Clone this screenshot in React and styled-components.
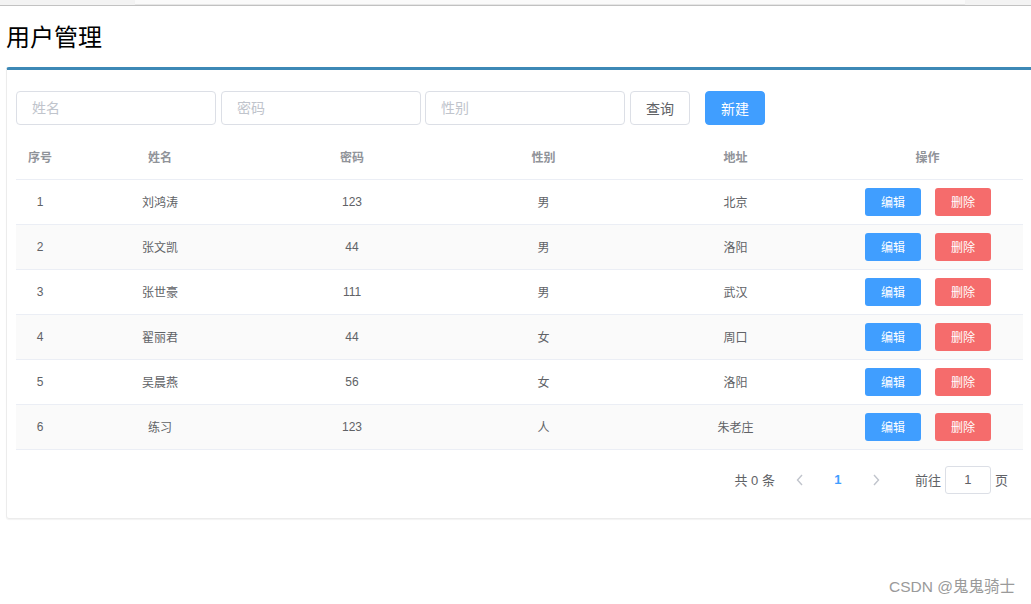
import React from "react";
import styled, { createGlobalStyle } from "styled-components";

const Global = createGlobalStyle`
  html, body { margin: 0; padding: 0; background: #fff; overflow: hidden; }
  body { font-family: "Liberation Sans", "Noto Sans CJK SC", sans-serif; }
  * { box-sizing: border-box; }
`;

const Page = styled.div`
  position: relative;
  width: 1031px;
  height: 604px;
  overflow: hidden;
`;

const TopBar = styled.div`
  height: 6px;
  background: #f3f3f3;
  border-bottom: 1px solid #c2c2c2;
  display: flex;
  padding-left: 135px;
`;

const TopTab = styled.div`
  width: 830px;
  height: 4px;
  background: #fafafa;
  box-shadow: 0 1px 1px rgba(0, 0, 0, 0.06);
`;

const Content = styled.div`
  padding-left: 6px;
`;

const Title = styled.h1`
  margin: 20px 0 17px 0;
  font-size: 24px;
  line-height: 24px;
  font-weight: 400;
  color: #000;
`;

const Box = styled.div`
  width: 1030px;
  border: 1px solid #ececec;
  border-top: 3px solid #3d89b6;
  border-radius: 3px;
  padding: 21px 0 24px 9px;
  box-shadow: 0 1px 1px rgba(0, 0, 0, 0.05);
`;

const Form = styled.div`
  display: flex;
  align-items: center;
  height: 34px;
`;

const Input = styled.input`
  width: 200px;
  height: 34px;
  margin-right: ${(p) => p.$mr}px;
  border: 1px solid #dcdfe6;
  border-radius: 4px;
  padding: 0 15px;
  font-size: 14px;
  font-family: inherit;
  color: #606266;
  outline: none;
  &::placeholder { color: #c0c4cc; }
`;

const Button = styled.button`
  width: 60px;
  height: 34px;
  margin-left: ${(p) => p.$ml || 0}px;
  margin-top: -1px;
  border-radius: 4px;
  font-size: 14px;
  font-family: inherit;
  border: 1px solid ${(p) => (p.$primary ? "#409eff" : "#dcdfe6")};
  background: ${(p) => (p.$primary ? "#409eff" : "#fff")};
  color: ${(p) => (p.$primary ? "#fff" : "#606266")};
  padding: 0;
`;

const Table = styled.table`
  margin-top: 10px;
  width: 1007px;
  border-collapse: collapse;
  table-layout: fixed;
  font-size: 12px;
`;

const Th = styled.th`
  height: 44px;
  padding: 0;
  text-align: center;
  color: #909399;
  font-weight: 700;
  border-bottom: 1px solid #ebeef5;
`;

const Tr = styled.tr`
  background: ${(p) => (p.$striped ? "#fafafa" : "#fff")};
`;

const Td = styled.td`
  height: 45px;
  padding: 0;
  text-align: center;
  color: #606266;
  border-bottom: 1px solid #ebeef5;
`;

const Ops = styled.div`
  display: flex;
  justify-content: center;
  gap: 14px;
  padding-left: 1px;
`;

const SmallBtn = styled.button`
  width: 56px;
  height: 28px;
  border: none;
  border-radius: 3px;
  padding: 0;
  font-size: 12px;
  font-family: inherit;
  color: #fff;
  background: ${(p) => (p.$danger ? "#f56c6c" : "#409eff")};
`;

const Pager = styled.div`
  margin-top: 16px;
  width: 1007px;
  padding-right: 15px;
  height: 28px;
  display: flex;
  justify-content: flex-end;
  align-items: center;
  font-size: 13px;
  color: #606266;
`;

const Total = styled.span`
  margin-right: 10px;
`;

const Arrow = styled.span`
  width: 30px;
  height: 28px;
  display: flex;
  align-items: center;
  justify-content: center;
`;

const PageNum = styled.span`
  width: 36px;
  margin: 0 5px;
  text-align: center;
  color: #409eff;
  font-weight: 700;
`;

const Jumper = styled.span`
  margin-left: 24px;
  display: flex;
  align-items: center;
`;

const JumpInput = styled.div`
  width: 46px;
  height: 28px;
  margin: 0 4px;
  border: 1px solid #dcdfe6;
  border-radius: 3px;
  display: flex;
  align-items: center;
  justify-content: center;
  color: #606266;
`;

const Watermark = styled.div`
  position: absolute;
  right: 16px;
  bottom: 8px;
  font-size: 15.5px;
  color: #9a9a9a;
`;

const Chevron = ({ dir }) => (
  <svg width="8" height="12" viewBox="0 0 8 12">
    <path
      d={dir === "left" ? "M6 1 L1.5 6 L6 11" : "M2 1 L6.5 6 L2 11"}
      fill="none"
      stroke="#c0c4cc"
      strokeWidth="1.4"
    />
  </svg>
);

const rows = [
  [1, "刘鸿涛", "123", "男", "北京"],
  [2, "张文凯", "44", "男", "洛阳"],
  [3, "张世豪", "111", "男", "武汉"],
  [4, "翟丽君", "44", "女", "周口"],
  [5, "吴晨燕", "56", "女", "洛阳"],
  [6, "练习", "123", "人", "朱老庄"],
];

export default function App() {
  return (
    <Page>
      <Global />
      <TopBar>
        <TopTab />
      </TopBar>
      <Content>
        <Title>用户管理</Title>
        <Box>
          <Form>
            <Input placeholder="姓名" $mr={5} />
            <Input placeholder="密码" $mr={4} />
            <Input placeholder="性别" $mr={5} />
            <Button>查询</Button>
            <Button $primary $ml={15}>新建</Button>
          </Form>
          <Table>
            <colgroup>
              <col style={{ width: 48 }} />
              <col style={{ width: 192 }} />
              <col style={{ width: 192 }} />
              <col style={{ width: 191 }} />
              <col style={{ width: 193 }} />
              <col style={{ width: 191 }} />
            </colgroup>
            <thead>
              <tr>
                <Th>序号</Th>
                <Th>姓名</Th>
                <Th>密码</Th>
                <Th>性别</Th>
                <Th>地址</Th>
                <Th>操作</Th>
              </tr>
            </thead>
            <tbody>
              {rows.map((r, i) => (
                <Tr key={r[0]} $striped={i % 2 === 1}>
                  {r.map((c, j) => (
                    <Td key={j}>{c}</Td>
                  ))}
                  <Td>
                    <Ops>
                      <SmallBtn>编辑</SmallBtn>
                      <SmallBtn $danger>删除</SmallBtn>
                    </Ops>
                  </Td>
                </Tr>
              ))}
            </tbody>
          </Table>
          <Pager>
            <Total>共 0 条</Total>
            <Arrow>
              <Chevron dir="left" />
            </Arrow>
            <PageNum>1</PageNum>
            <Arrow>
              <Chevron dir="right" />
            </Arrow>
            <Jumper>
              前往
              <JumpInput>1</JumpInput>
              页
            </Jumper>
          </Pager>
        </Box>
      </Content>
      <Watermark>CSDN @鬼鬼骑士</Watermark>
    </Page>
  );
}
